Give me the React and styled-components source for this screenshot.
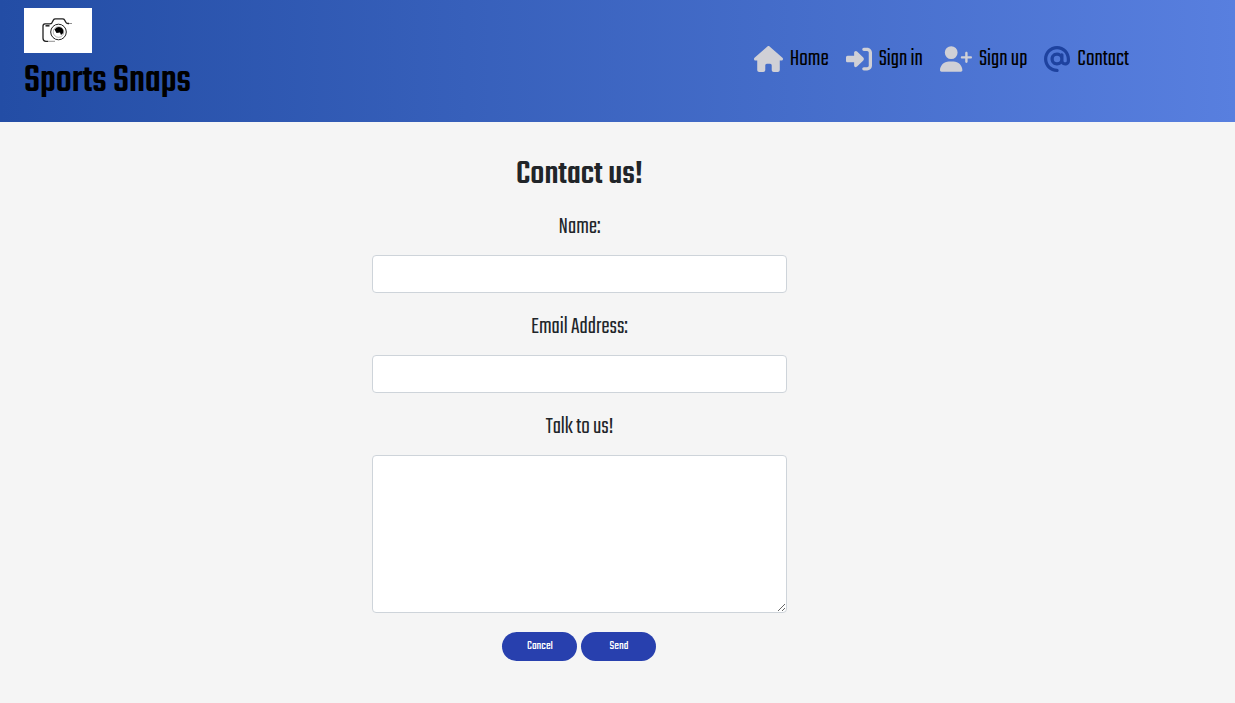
import React from "react";
import styled, { createGlobalStyle } from "styled-components";
import { FaHouse, FaRightToBracket, FaUserPlus, FaAt } from "react-icons/fa6";

const GlobalStyle = createGlobalStyle`
  *, *::before, *::after { box-sizing: border-box; }
  body {
    margin: 0;
    background: #f5f5f5;
    color: #212529;
    font-family: Teko, "Roboto Condensed", "Liberation Sans Narrow", "Liberation Sans", sans-serif;
    font-weight: 300;
  }
`;

const Header = styled.header`
  display: flex;
  justify-content: space-between;
  padding: 8px 106px 20px 24px;
  background: linear-gradient(90deg, #234da5, #587fdf);
`;

const Brand = styled.a`
  display: block;
  color: #000;
  text-decoration: none;
`;

const LogoCard = styled.span`
  display: block;
  width: 68px;
  height: 45px;
  background: #fff;
`;

const BrandName = styled.span`
  display: block;
  height: 49px;
  font-size: 40px;
  line-height: 58px;
  font-weight: 500;
  white-space: nowrap;
`;

const Nav = styled.nav`
  display: flex;
  align-items: center;
  gap: 17px;
  padding-top: 8px;
`;

const NavLink = styled.a`
  display: flex;
  align-items: center;
  gap: 7px;
  color: #000;
  font-size: 25px;
  line-height: 26px;
  white-space: nowrap;
  text-decoration: none;

  svg {
    width: ${(p) => p.$iconWidth}px;
    height: 26px;
    color: ${(p) => (p.$active ? "#1e429f" : "#d0d0d6")};
  }
`;

const Main = styled.main`
  padding-right: 76px;
`;

const Form = styled.form`
  display: flex;
  flex-direction: column;
  align-items: center;
  width: 36%;
  min-width: 280px;
  margin: 0 auto;
  padding: 32px 1px 43px;
`;

const Title = styled.h1`
  margin: 0 0 16px;
  font-size: 35px;
  line-height: 42px;
  font-weight: 500;
`;

const Field = styled.div`
  display: flex;
  flex-direction: column;
  align-items: center;
  width: 100%;
  margin-bottom: 19px;
`;

const Label = styled.label`
  margin-bottom: 13px;
  font-size: 25px;
  line-height: 30px;
`;

const Input = styled.input`
  width: 100%;
  height: 38px;
  padding: 6px 12px;
  border: 1px solid #ced4da;
  border-radius: 4px;
  background: #fff;
  font: inherit;
`;

const TextArea = styled.textarea`
  display: block;
  width: 100%;
  height: 158px;
  padding: 6px 12px;
  border: 1px solid #ced4da;
  border-radius: 4px;
  background: #fff;
  font: inherit;
  resize: vertical;
`;

const Actions = styled.div`
  display: flex;
  gap: 4px;
`;

const Button = styled.button`
  width: 75px;
  height: 29px;
  padding: 0 0 2px;
  border: 0;
  border-radius: 15px;
  background: #2840ae;
  color: #fff;
  font-family: inherit;
  font-size: 13px;
  font-weight: 400;
`;

function CameraLogo() {
  return (
    <svg width="68" height="45" viewBox="0 0 68 45" fill="none" stroke="#222" aria-hidden="true">
      <path d="M24 33.3h-2q-3 0-3-3V18q0-2 2-2.200h5l1.500-.3 2-3.600q.5-1 2-1h7q1.500 0 2 1l1.500 2.600q.5 1 2 1h1" strokeWidth="1.300" />
      <path d="M24 33.300h7M43 15.500h5" strokeWidth=".5" />
      <path d="M21.500 17.800h4" strokeWidth="1.500" />
      <circle cx="34.500" cy="24" r="7.800" strokeWidth="1" />
      <circle cx="34.500" cy="24" r="5.300" strokeWidth=".6" stroke="#888" />
      <path d="M30.500 21.500q3-3.500 6.500-2 3 1.500 2.200 5.500l-2.200 2-1-2.600-3.500.500z" fill="#000" stroke="none" />
    </svg>
  );
}

const links = [
  { label: "Home", Icon: FaHouse, width: 29 },
  { label: "Sign in", Icon: FaRightToBracket, width: 26 },
  { label: "Sign up", Icon: FaUserPlus, width: 32 },
  { label: "Contact", Icon: FaAt, width: 26, active: true },
];

export default function App() {
  return (
    <>
      <GlobalStyle />
      <Header>
        <Brand href="#home">
          <LogoCard><CameraLogo /></LogoCard>
          <BrandName>Sports Snaps</BrandName>
        </Brand>
        <Nav aria-label="Main">
          {links.map(({ label, Icon, width, active }) => (
            <NavLink key={label} href="#" $iconWidth={width} $active={active} aria-current={active ? "page" : undefined}>
              <Icon aria-hidden="true" />
              {label}
            </NavLink>
          ))}
        </Nav>
      </Header>
      <Main>
        <Form onSubmit={(e) => e.preventDefault()}>
          <Title>Contact us!</Title>
          <Field>
            <Label htmlFor="name">Name:</Label>
            <Input id="name" type="text" />
          </Field>
          <Field>
            <Label htmlFor="email">Email Address:</Label>
            <Input id="email" type="email" />
          </Field>
          <Field>
            <Label htmlFor="message">Talk to us!</Label>
            <TextArea id="message" />
          </Field>
          <Actions>
            <Button type="button">Cancel</Button>
            <Button type="submit">Send</Button>
          </Actions>
        </Form>
      </Main>
    </>
  );
}
